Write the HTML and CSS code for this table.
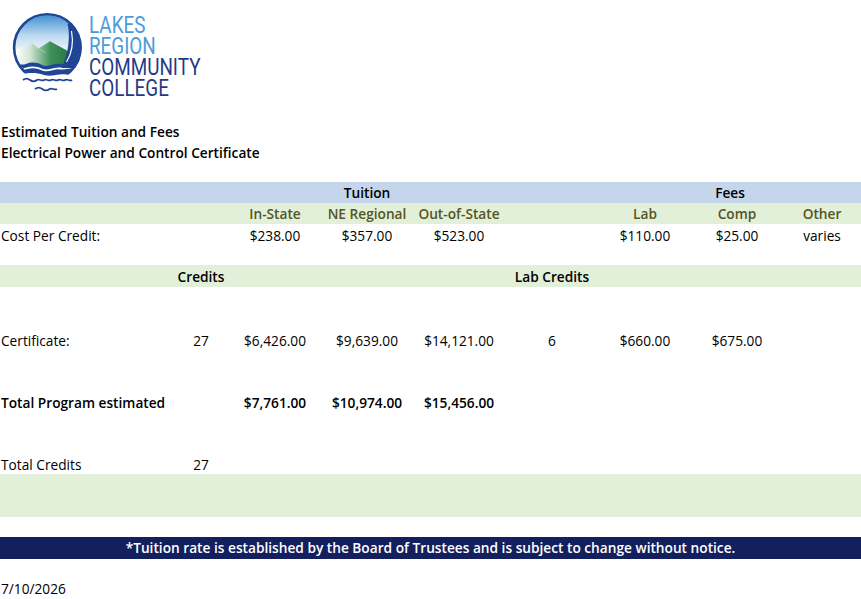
FILE: index.html
```html
<!DOCTYPE html>
<html lang="en">
<head>
<meta charset="utf-8">
<title>Estimated Tuition and Fees</title>
<link rel="stylesheet" href="styles.css">
</head>
<body>
<header class="logo">
  <svg class="logo-mark" viewBox="0 0 86 100" aria-hidden="true">
    <defs>
      <clipPath id="cin"><circle cx="47.3" cy="47.5" r="32.2"/></clipPath>
      <clipPath id="cout"><circle cx="47.3" cy="47.5" r="34.4"/></clipPath>
      <linearGradient id="sky" gradientUnits="userSpaceOnUse" x1="0" y1="15" x2="0" y2="56">
        <stop offset="0" stop-color="#3f8fd2"/>
        <stop offset="0.5" stop-color="#bcd9f0"/>
        <stop offset="1" stop-color="#ffffff"/>
      </linearGradient>
      <linearGradient id="mtn" gradientUnits="userSpaceOnUse" x1="16" y1="0" x2="64" y2="0">
        <stop offset="0" stop-color="#ffffff"/>
        <stop offset="0.3" stop-color="#cfe4d4"/>
        <stop offset="0.72" stop-color="#3f9058"/>
        <stop offset="1" stop-color="#2f7d48"/>
      </linearGradient>
    </defs>
    <g clip-path="url(#cin)">
      <rect x="0" y="0" width="86" height="100" fill="url(#sky)"/>
      <path d="M12 50.5 L20 48 L31.7 43.7 L38 48.7 L50 41.3 L67 50.5 L67 72 L12 72 Z" fill="url(#mtn)"/>
      <path d="M31.7 43.7 L45 52.5" fill="none" stroke="#a9d0b2" stroke-width="0.9"/>
      <path d="M10 65 C15 62 20 66 26 64 S36 62 42 65 S54 63 60 64 S70 62 84 62 L84 90 L10 90 Z" fill="#1f4597"/>
      <path d="M10 69 C15 66.5 20 70.5 26 68.5 S36 66.5 42 69.5 S54 67.5 60 68.5 S70 66.5 84 66.5" fill="none" stroke="#ffffff" stroke-width="1.8"/>
    </g>
    <g clip-path="url(#cout)">
      <path d="M67.5 24 C70.5 36 68.5 52 62 68 L86 68 L86 20 Z" fill="#1f4597"/>
    </g>
    <circle cx="47.3" cy="47.5" r="33.2" fill="none" stroke="#1f4597" stroke-width="2.6"/>
    <path d="M71.5 31 C73.5 42 71.5 54 66.5 62" fill="none" stroke="#ffffff" stroke-width="1.2"/>
    <path d="M0 74.5 C8 72.5 14 76.5 22 74.5 S36 72.5 44 75 S58 73 66 74.5 S78 72.5 86 74 L86 100 L0 100 Z" fill="#ffffff"/>
    <path d="M23 80 c2.3 -1.8 4.7 -1.8 7 0 s4.7 1.8 7 0 s4.7 1.8 7 0 s4.7 1.8 7 0 s4.7 1.8 7 0 s4.7 1.8 7 0 s4.7 1.8 7 0" fill="none" stroke="#1f4597" stroke-width="1.8"/>
    <path d="M35 89 c2.4 -1.8 4.9 -1.8 7.3 0 s4.9 1.8 7.3 0 s4.9 1.8 7.3 0" fill="none" stroke="#1f4597" stroke-width="1.8"/>
  </svg>
  <div class="logo-text">
    <span class="lt lt-light">LAKES</span>
    <span class="lt lt-light">REGION</span>
    <span class="lt lt-dark">COMMUNITY</span>
    <span class="lt lt-dark">COLLEGE</span>
  </div>
</header>

<section class="title">
  <div>Estimated Tuition and Fees</div>
  <div>Electrical Power and Control Certificate</div>
</section>

<section class="sheet">
  <div class="row band-blue hdr">
    <div class="c span-tuition strong">Tuition</div>
    <div class="c span-fees strong">Fees</div>
  </div>
  <div class="row band-green hdr">
    <div class="c col-3 sub">In-State</div>
    <div class="c col-4 sub">NE Regional</div>
    <div class="c col-5 sub">Out-of-State</div>
    <div class="c col-7 sub">Lab</div>
    <div class="c col-8 sub">Comp</div>
    <div class="c col-9 sub">Other</div>
  </div>
  <div class="row">
    <div class="lbl col-1">Cost Per Credit:</div>
    <div class="c col-3">$238.00</div>
    <div class="c col-4">$357.00</div>
    <div class="c col-5">$523.00</div>
    <div class="c col-7">$110.00</div>
    <div class="c col-8">$25.00</div>
    <div class="c col-9">varies</div>
  </div>
  <div class="gap g20"></div>
  <div class="row band-green hdr tall">
    <div class="c col-2 strong">Credits</div>
    <div class="c col-6 strong">Lab Credits</div>
  </div>
  <div class="gap g42"></div>
  <div class="row">
    <div class="lbl col-1">Certificate:</div>
    <div class="c col-2">27</div>
    <div class="c col-3">$6,426.00</div>
    <div class="c col-4">$9,639.00</div>
    <div class="c col-5">$14,121.00</div>
    <div class="c col-6">6</div>
    <div class="c col-7">$660.00</div>
    <div class="c col-8">$675.00</div>
  </div>
  <div class="gap g41"></div>
  <div class="row strong">
    <div class="lbl col-1">Total Program estimated</div>
    <div class="c col-3">$7,761.00</div>
    <div class="c col-4">$10,974.00</div>
    <div class="c col-5">$15,456.00</div>
  </div>
  <div class="gap g41"></div>
  <div class="row">
    <div class="lbl col-1">Total Credits</div>
    <div class="c col-2">27</div>
  </div>
  <div class="band-green block43"></div>
  <div class="gap g20"></div>
  <div class="notice">*Tuition rate is established by the Board of Trustees and is subject to change without notice.</div>
  <div class="gap g19"></div>
  <div class="row short">
    <div class="lbl col-1">7/10/2026</div>
  </div>
</section>
</body>
</html>
```

FILE: styles.css
```css
html, body {
  margin: 0;
  padding: 0;
  background: #ffffff;
}

body {
  font-family: "Open Sans", "Noto Sans", sans-serif;
  font-size: 13.7px;
  color: #000000;
  width: 861px;
  overflow: hidden;
}

/* Logo */
.logo {
  display: flex;
  align-items: flex-start;
  height: 121px;
}

.logo-mark {
  width: 86px;
  height: 100px;
  flex: none;
}

.logo-text {
  display: flex;
  flex-direction: column;
  padding-top: 15px;
  margin-left: 3px;
  transform: scaleX(0.82);
  transform-origin: left top;
}

.lt {
  font-family: Roboto, "Liberation Sans", sans-serif;
  font-size: 23px;
  line-height: 21px;
  white-space: nowrap;
}

.lt-light { color: #4b9cd9; }
.lt-dark { color: #1f3b87; }

/* Title */
.title {
  font-weight: 600;
  line-height: 21px;
  padding-left: 1px;
}

/* Sheet */
.sheet {
  margin-top: 19px;
}

.row {
  display: grid;
  grid-template-columns: 173px 56px 92px 92px 92px 94px 92px 92px 78px;
  height: 21px;
  align-items: end;
  line-height: 18px;
  white-space: nowrap;
}

.row.tall { height: 22px; }
.row.short { height: 20px; }
.hdr { padding-bottom: 1px; box-sizing: border-box; }

.band-blue { background: #c5d5eb; }
.band-green { background: #e2efd9; }

.c { text-align: center; }
.lbl { text-align: left; padding-left: 1px; }
.strong { font-weight: 600; }
.sub { font-weight: 600; color: #555522; }

.col-1 { grid-column: 1; }
.col-2 { grid-column: 2; }
.col-3 { grid-column: 3; }
.col-4 { grid-column: 4; }
.col-5 { grid-column: 5; }
.col-6 { grid-column: 6; }
.col-7 { grid-column: 7; }
.col-8 { grid-column: 8; }
.col-9 { grid-column: 9; }
.span-tuition { grid-column: 3 / 6; }
.span-fees { grid-column: 7 / 10; }

.gap { height: 20px; }
.g19 { height: 19px; }
.g20 { height: 20px; }
.g41 { height: 41px; }
.g42 { height: 42px; }

.block43 { height: 43px; }

.notice {
  background: #141f5e;
  color: #ffffff;
  font-weight: 600;
  height: 22px;
  line-height: 22px;
  text-align: center;
  white-space: nowrap;
}
```
